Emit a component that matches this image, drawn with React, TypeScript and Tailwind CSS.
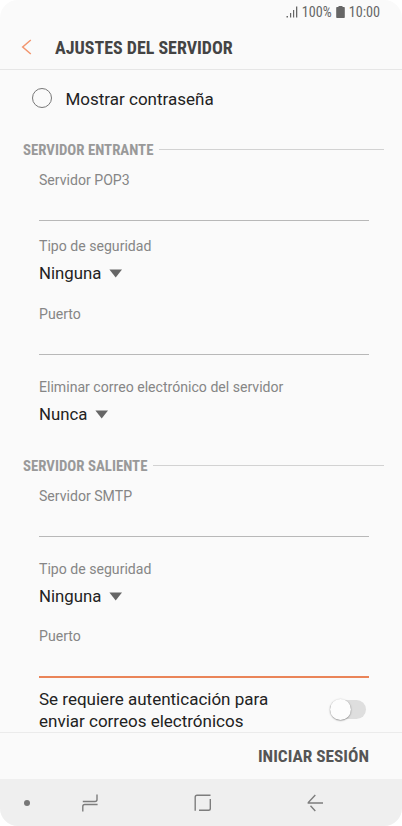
import React from "react";

function SectionHeader({ children }: { children: React.ReactNode }) {
  return (
    <div className="flex h-5 items-center gap-[6px] pl-[23px] pr-[18px]">
      <h2 className="whitespace-nowrap text-[14.85px] leading-5 font-bold text-[#999] font-stretch-condensed">
        {children}
      </h2>
      <div className="-mt-[1px] h-px flex-1 bg-[#d2d2d2]" />
    </div>
  );
}

function Field({ label, active = false }: { label: string; active?: boolean }) {
  return (
    <label className="ml-[39px] mr-[33px] block">
      <span className="block text-[14.1px] leading-5 text-[#868686]">{label}</span>
      <span
        className={
          active
            ? "block h-[32px] border-b-2 border-[#ea8458]"
            : "block h-[31px] border-b border-[#b8b8b8]"
        }
      />
    </label>
  );
}

function Choice({ label, value }: { label: string; value: string }) {
  return (
    <div className="ml-[39px]">
      <div className="text-[14.1px] leading-5 text-[#868686]">{label}</div>
      <div className="mt-[6px] flex h-[22px] items-center gap-2 text-[16.8px] leading-[22px] text-[#222]">
        <span>{value}</span>
        <svg width="13" height="9" viewBox="0 0 13 9" fill="#666">
          <path d="M.4 .5H13L6.700 8.500z" />
        </svg>
      </div>
    </div>
  );
}

export default function App() {
  return (
    <div className="h-[826px] w-[402px] bg-white">
      <div className="flex h-full flex-col overflow-hidden rounded-[18px] bg-[#fafafa] font-['Roboto',sans-serif]">
        <div className="flex h-6 items-center justify-end pr-[22px] text-[14.2px] leading-6 text-[#666] font-stretch-condensed">
          <svg className="mr-[4px]" width="12" height="12" viewBox="0 0 12 12" fill="#666">
            <path d="M.5 10h1.500v1.500H.5zM4 7h1.200v4.500H4zM7 4h1.200v7.500H7zM10 .5h1.300v11H10z" />
          </svg>
          <span>100%</span>
          <svg className="ml-[4px] mr-[4px]" width="9" height="12" viewBox="0 0 9 12" fill="#666">
            <path d="M2.500 0h4v1H8a.8.8 0 0 1 .8.8v9.400a.8.8 0 0 1-.8.8H1a.8.8 0 0 1-.8-.8V1.800A.8.8 0 0 1 1 1h1.500z" />
          </svg>
          <span>10:00</span>
        </div>
        <header className="flex h-[46px] items-center border-b border-[#e6e6e6] pl-[21px]">
          <svg width="12" height="16" viewBox="0 0 12 16" fill="none" stroke="#f2966f" strokeWidth="1.500">
            <path d="M9.800 1 1.700 8l8.100 7" />
          </svg>
          <h1 className="ml-[22px] pt-[3px] text-[17.95px] font-bold text-[#444] font-stretch-condensed">
            AJUSTES DEL SERVIDOR
          </h1>
        </header>
        <main className="h-[662px] overflow-hidden">
          <div className="mt-[17px] flex h-[22px] items-center pl-[32px]">
            <span className="size-5 rounded-full border border-[#777]" />
            <span className="ml-[13.5px] pt-[2px] text-[17px] leading-[22px] text-[#222]">Mostrar contraseña</span>
          </div>
          <div className="mt-[31px]">
            <SectionHeader>SERVIDOR ENTRANTE</SectionHeader>
          </div>
          <div className="mt-[10px]">
            <Field label="Servidor POP3" />
          </div>
          <div className="mt-[15px]">
            <Choice label="Tipo de seguridad" value="Ninguna" />
          </div>
          <div className="mt-[20px]">
            <Field label="Puerto" />
          </div>
          <div className="mt-[22px]">
            <Choice label="Eliminar correo electrónico del servidor" value="Nunca" />
          </div>
          <div className="mt-[31px]">
            <SectionHeader>SERVIDOR SALIENTE</SectionHeader>
          </div>
          <div className="mt-[10px]">
            <Field label="Servidor SMTP" />
          </div>
          <div className="mt-[22px]">
            <Choice label="Tipo de seguridad" value="Ninguna" />
          </div>
          <div className="mt-[19px]">
            <Field label="Puerto" active />
          </div>
          <div className="mt-[10px] flex items-center justify-between pl-[39px] pr-[36px]">
            <p className="text-[17px] leading-[22px] text-[#222]">
              Se requiere autenticación para
              <br />
              enviar correos electrónicos
            </p>
            <span className="-mt-[2px] flex h-[19px] w-[36px] items-center rounded-full bg-[#dedede]">
              <span className="size-[21px] shrink-0 rounded-full bg-[#fdfdfd] shadow-[0_0.5px_1.5px_rgba(0,0,0,0.5)]" />
            </span>
          </div>
        </main>
        <footer className="flex h-[47px] items-center justify-end border-t border-[#ebebeb] pr-[33px] pt-[2px] text-[17.25px] font-bold text-[#555] font-stretch-condensed">
          INICIAR SESIÓN
        </footer>
        <nav className="flex h-[47px] items-center bg-[#efefef] pl-[24px]">
          <span className="size-[6px] rounded-full bg-[#777]" />
          <svg className="ml-[52px]" width="18" height="20" viewBox="0 0 18 20" fill="none" stroke="#7d7d7d" strokeWidth="1.400">
            <path d="M.8 8.500h12.200q2 0 2-2V1.500M.8 18.500v-5q0-2 2-2h12.800" />
          </svg>
          <svg className="ml-[94px]" width="18" height="18" viewBox="0 0 18 18" fill="none" stroke="#7d7d7d" strokeWidth="1.400">
            <path d="M1.200 16.800V3q0-1.800 1.800-1.800h13.500M16.300 5v9.500q0 1.800-1.800 1.800H5" />
          </svg>
          <svg className="ml-[95px]" width="18" height="18" viewBox="0 0 18 18" fill="none" stroke="#7d7d7d" strokeWidth="1.400">
            <path d="M8.300 1 1.300 8.500v.5h14.700M3.500 11.800 8.300 17" />
          </svg>
        </nav>
      </div>
    </div>
  );
}
